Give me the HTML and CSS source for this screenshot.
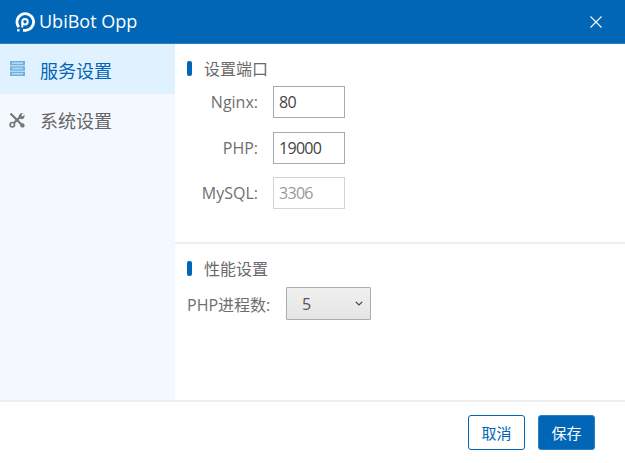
FILE: index.html
```html
<!DOCTYPE html>
<html lang="zh">
<head>
<meta charset="utf-8">
<title>UbiBot Opp</title>
<link rel="stylesheet" href="styles.css">
</head>
<body>
<div class="dialog">
  <header class="titlebar">
    <div class="brand">
      <svg class="logo" width="20" height="20" viewBox="0 0 20 20" fill="none" stroke="#fff">
        <path d="M3.800 15.200A8.300 8.300 0 1 1 10.500 18.300H8" stroke-width="2.800"/>
        <circle cx="10" cy="9.800" r="2.700" stroke-width="2"/>
        <path d="M7.300 10v5.500" stroke-width="2"/>
        <rect x="2" y="17.200" width="2.600" height="2.200" fill="#fff" stroke="none"/>
      </svg>
      <span class="brand-name">UbiBot Opp</span>
    </div>
    <svg class="close" width="14" height="14" viewBox="0 0 14 14" stroke="#fff" stroke-width="1.100"><path d="M1.500 1.500l11 11M12.500 1.500l-11 11"/></svg>
  </header>
  <div class="body">
    <nav class="sidebar">
      <div class="nav-item active">
        <svg class="icon-server" width="15" height="15" viewBox="0 0 15 15">
          <rect x="0" y="0" width="15" height="4.400" fill="#6fb0e0"/><rect x="2" y="1.400" width="11" height="1.600" fill="#b5d8f2"/>
          <rect x="0" y="5.300" width="15" height="4.400" fill="#6fb0e0"/><rect x="2" y="6.700" width="11" height="1.600" fill="#b5d8f2"/>
          <rect x="0" y="10.600" width="15" height="4.400" fill="#6fb0e0"/><rect x="2" y="12" width="11" height="1.600" fill="#b5d8f2"/>
        </svg>
        <span>服务设置</span>
      </div>
      <div class="nav-item">
        <svg class="icon-tools" width="16" height="16" viewBox="0 0 16 16" fill="none" stroke="#777">
          <path d="M1.500 1.500L14 14" stroke-width="2.200"/>
          <path d="M4.500 11.500L11.500 4.500" stroke-width="2.200"/>
          <circle cx="3.300" cy="12.700" r="2.200" stroke-width="1.700"/>
          <path d="M9.800 3.200a3.200 3.200 0 0 0 4.500 3.600l1-1.200.3-3-1.700 1.700h-1.300V2.800l1.700-1.700-2.600.2z" fill="#777" stroke="none"/>
          <circle cx="13.400" cy="13.400" r="2.200" fill="#777" stroke="none"/>
        </svg>
        <span>系统设置</span>
      </div>
    </nav>
    <main class="content">
      <section class="ports">
        <h2 class="section-title">设置端口</h2>
        <div class="fields">
          <div class="field"><label class="field-label">Nginx:</label><input class="text-input" value="80"></div>
          <div class="field"><label class="field-label">PHP:</label><input class="text-input" value="19000"></div>
          <div class="field"><label class="field-label">MySQL:</label><input class="text-input" value="3306" disabled></div>
        </div>
      </section>
      <section class="perf">
        <h2 class="section-title">性能设置</h2>
        <div class="select-row">
          <label class="select-label">PHP进程数:</label>
          <div class="select">
            <span>5</span>
            <svg width="8" height="5" viewBox="0 0 8 5" fill="none" stroke="#444" stroke-width="1.200"><path d="M.8.8L4 4l3.200-3.200"/></svg>
          </div>
        </div>
      </section>
    </main>
  </div>
  <footer class="footer">
    <button class="btn btn-outline">取消</button>
    <button class="btn btn-primary">保存</button>
  </footer>
</div>
</body>
</html>
```

FILE: styles.css
```css
* { box-sizing: border-box; }
html, body { margin: 0; height: 100%; }
body {
  font-family: "Open Sans", "Noto Sans CJK SC", sans-serif;
  background: #fff;
  color: #666;
  overflow: hidden;
}
.dialog { width: 625px; height: 463px; display: flex; flex-direction: column; }
.titlebar {
  height: 44px;
  flex: none;
  background: #0166b5;
  border-bottom: 1px solid #2a80c4;
  display: flex;
  align-items: center;
  justify-content: space-between;
  padding: 0 22px 0 15px;
  color: #fff;
}
.brand { display: flex; align-items: center; gap: 4px; }
.logo { display: block; }
.brand-name { font-size: 18px; line-height: 24px; margin-top: -2px; }
.close { display: block; }
.body { flex: 1; display: flex; min-height: 0; }
.sidebar { width: 175px; flex: none; background: #f4f9ff; }
.nav-item {
  height: 50px;
  display: flex;
  align-items: center;
  padding: 1px 0 0 10px;
  font-size: 18px;
  color: #666;
}
.nav-item svg { display: block; margin-right: 15px; }
.nav-item .icon-server { margin-top: -2px; }
.nav-item .icon-tools { margin-left: -1px; margin-right: 15px; }
.nav-item.active { background: #e0f1ff; color: #0166b5; }
.content { flex: 1; min-width: 0; }
.ports { height: 200px; padding-top: 15px; border-bottom: 2px solid #eee; }
.perf { padding-top: 15px; }
.section-title {
  margin: 0 0 0 13px;
  padding-left: 16px;
  font-size: 16px;
  font-weight: 400;
  line-height: 21px;
  color: #6a6a6a;
  position: relative;
}
.section-title::before {
  content: "";
  position: absolute;
  left: -1px;
  top: 2px;
  width: 5px;
  height: 15px;
  border-radius: 2px;
  background: #0166b5;
}
.fields { display: flex; flex-direction: column; gap: 13.5px; margin-top: 6px; }
.field { display: flex; align-items: center; }
.field-label { width: 83px; text-align: right; font-size: 16px; color: #6f6f6f; }
.text-input {
  width: 72px;
  height: 32px;
  margin-left: 15px;
  padding: 0 5px;
  border: 1px solid #a9a9b4;
  background: #fff;
  font: 16px "Open Sans", sans-serif;
  letter-spacing: -0.7px;
  color: #444;
  outline: none;
  border-radius: 0;
}
.text-input:disabled { border-color: #d4d4d4; color: #999; background: #fff; }
.select-row { display: flex; align-items: center; padding-left: 12px; margin-top: 7px; }
.select-label { font-size: 16px; width: 99px; color: #6f6f6f; }
.select {
  width: 85px;
  height: 33px;
  border: 1px solid #acacac;
  border-radius: 1px;
  background: linear-gradient(#f0f0f0, #e5e5e5);
  display: flex;
  align-items: center;
  justify-content: space-between;
  padding: 0 7px 0 15px;
  font-size: 16px;
  color: #555;
}
.footer {
  height: 63px;
  flex: none;
  border-top: 2px solid #eee;
  display: flex;
  justify-content: flex-end;
  gap: 13px;
  padding: 13px 30px 0 0;
}
.btn {
  width: 57px;
  height: 35px;
  border-radius: 3px;
  font: 15px "Noto Sans CJK SC", sans-serif;
  padding: 0;
}
.btn-outline { background: #fff; border: 1px solid #0166b5; color: #0166b5; }
.btn-primary { background: #0166b5; border: 1px solid #2a80c4; color: #fff; }
```
